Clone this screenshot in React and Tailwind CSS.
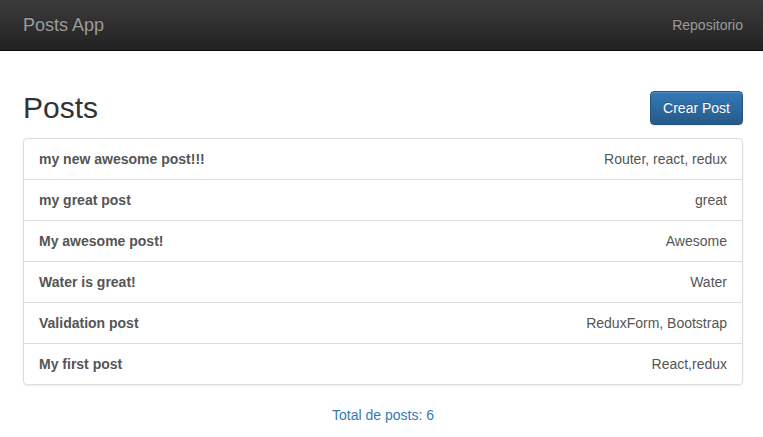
const posts = [
  { id: 1, title: 'my new awesome post!!!', categories: 'Router, react, redux' },
  { id: 2, title: 'my great post', categories: 'great' },
  { id: 3, title: 'My awesome post!', categories: 'Awesome' },
  { id: 4, title: 'Water is great!', categories: 'Water' },
  { id: 5, title: 'Validation post', categories: 'ReduxForm, Bootstrap' },
  { id: 6, title: 'My first post', categories: 'React,redux' },
]

export default function App() {
  return (
    <div className="min-h-screen bg-white text-[14px] leading-[20px] text-[#333] font-['Liberation_Sans',Arial,sans-serif]">
      <nav className="h-[51px] border-b border-[#080808] bg-[linear-gradient(to_bottom,#3c3c3c_0%,#222_100%)] flex items-center justify-between pl-[23px] pr-[20px]">
        <a className="text-[18px] leading-[20px] text-[#9d9d9d] [text-shadow:0_-1px_0_rgba(0,0,0,0.25)]">
          Posts App
        </a>
        <a className="text-[14px] leading-[20px] text-[#9d9d9d] [text-shadow:0_-1px_0_rgba(0,0,0,0.25)]">
          Repositorio
        </a>
      </nav>

      <div className="pl-[23px] pr-[20px] pt-[40px]">
        <div className="flex justify-between items-start">
          <h2 className="text-[30px] leading-[33px] font-normal text-[#333]">Posts</h2>
          <button className="h-[34px] px-[12px] rounded-[4px] border border-[#245580] bg-[linear-gradient(to_bottom,#337ab7_0%,#265a88_100%)] text-white text-[14px] leading-[20px] [text-shadow:0_-1px_0_rgba(0,0,0,0.2)] shadow-[inset_0_1px_0_rgba(255,255,255,0.15),0_1px_1px_rgba(0,0,0,0.075)]">
            Crear Post
          </button>
        </div>

        <ul className="mt-[13px] rounded-[4px] border border-[#ddd] shadow-[0_1px_2px_rgba(0,0,0,0.075)]">
          {posts.map((post, idx) => (
            <li
              key={post.id}
              className={`flex justify-between px-[15px] py-[10px] text-[#555] ${idx > 0 ? 'border-t border-[#ddd]' : ''}`}
            >
              <strong className="font-bold">{post.title}</strong>
              <span>{post.categories}</span>
            </li>
          ))}
        </ul>

        <p className="mt-[20px] text-center text-[#337ab7]">Total de posts: {posts.length}</p>
      </div>
    </div>
  )
}
